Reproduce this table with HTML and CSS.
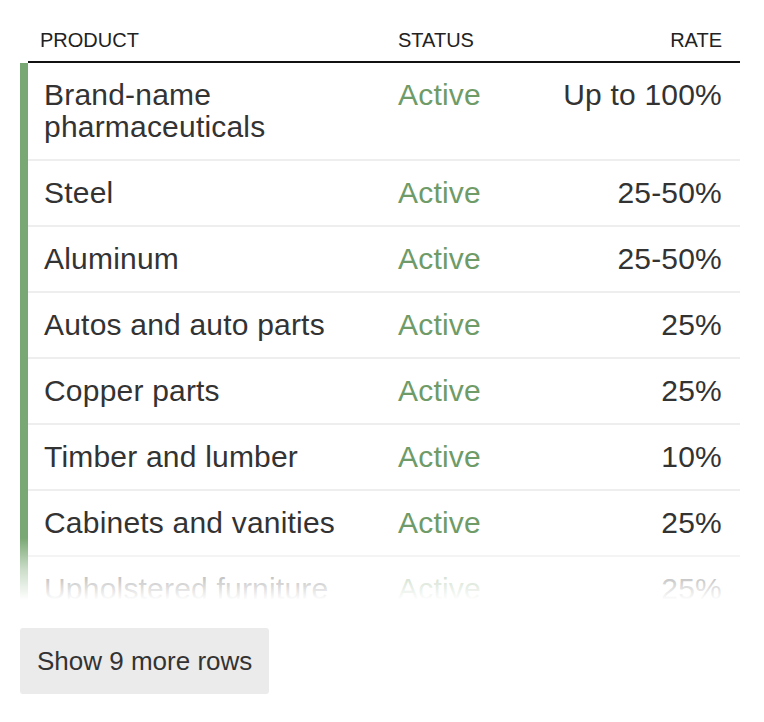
FILE: index.html
```html
<!DOCTYPE html>
<html>
<head>
    <title>Tariffs</title>
    <link rel="stylesheet" href="styles.css">
</head>
<body>
    <div class="tariff-table">
        <div class="table-head">
            <div>Product</div>
            <div>Status</div>
            <div class="rate">Rate</div>
        </div>
        <div class="table-body">
            <div class="rows">
                <div class="row">
                    <div class="product">Brand-name pharmaceuticals</div>
                    <div class="status">Active</div>
                    <div class="rate">Up to 100%</div>
                </div>
                <div class="row">
                    <div class="product">Steel</div>
                    <div class="status">Active</div>
                    <div class="rate">25-50%</div>
                </div>
                <div class="row">
                    <div class="product">Aluminum</div>
                    <div class="status">Active</div>
                    <div class="rate">25-50%</div>
                </div>
                <div class="row">
                    <div class="product">Autos and auto parts</div>
                    <div class="status">Active</div>
                    <div class="rate">25%</div>
                </div>
                <div class="row">
                    <div class="product">Copper parts</div>
                    <div class="status">Active</div>
                    <div class="rate">25%</div>
                </div>
                <div class="row">
                    <div class="product">Timber and lumber</div>
                    <div class="status">Active</div>
                    <div class="rate">10%</div>
                </div>
                <div class="row">
                    <div class="product">Cabinets and vanities</div>
                    <div class="status">Active</div>
                    <div class="rate">25%</div>
                </div>
                <div class="row">
                    <div class="product">Upholstered furniture</div>
                    <div class="status">Active</div>
                    <div class="rate">25%</div>
                </div>
                <div class="row">
                    <div class="product">Kitchen cabinets</div>
                    <div class="status">Active</div>
                    <div class="rate">25%</div>
                </div>
            </div>
            <div class="fade"></div>
        </div>
        <button class="more-button">Show 9 more rows</button>
    </div>
</body>
</html>
```

FILE: styles.css
```css
body {
    font-family: "Liberation Sans", Arial, sans-serif;
    color: #333;
    background-color: #fff;
    margin: 0;
    padding: 28px 24px 0 20px;
}
.tariff-table {
    width: 720px;
}
.table-head {
    display: grid;
    grid-template-columns: 358px 1fr auto;
    margin-left: 8px;
    padding: 0 18px 9px 12px;
    border-bottom: 2px solid #111;
    font-size: 20px;
    line-height: 24px;
    text-transform: uppercase;
    color: #222;
}
.rate {
    text-align: right;
}
.table-body {
    position: relative;
    height: 537px;
    overflow: hidden;
}
.rows {
    border-left: 8px solid #7aa874;
}
.row {
    display: grid;
    grid-template-columns: 354px 1fr auto;
    padding: 16px 18px 16px 16px;
    border-bottom: 2px solid #eeeeee;
    font-size: 30px;
    line-height: 32px;
    letter-spacing: 0.2px;
}
.product {
    padding-right: 10px;
}
.status {
    color: #6e9b67;
}
.fade {
    position: absolute;
    left: 0;
    right: 0;
    bottom: 0;
    height: 62px;
    background: linear-gradient(rgba(255, 255, 255, 0), rgba(255, 255, 255, 0.6) 50%, #fff);
}
.more-button {
    margin-top: 28px;
    background-color: #ebebeb;
    border: none;
    border-radius: 3px;
    color: #333;
    font-family: "Liberation Sans", Arial, sans-serif;
    font-size: 26px;
    padding: 0 17px;
    height: 66px;
    cursor: pointer;
}
```
